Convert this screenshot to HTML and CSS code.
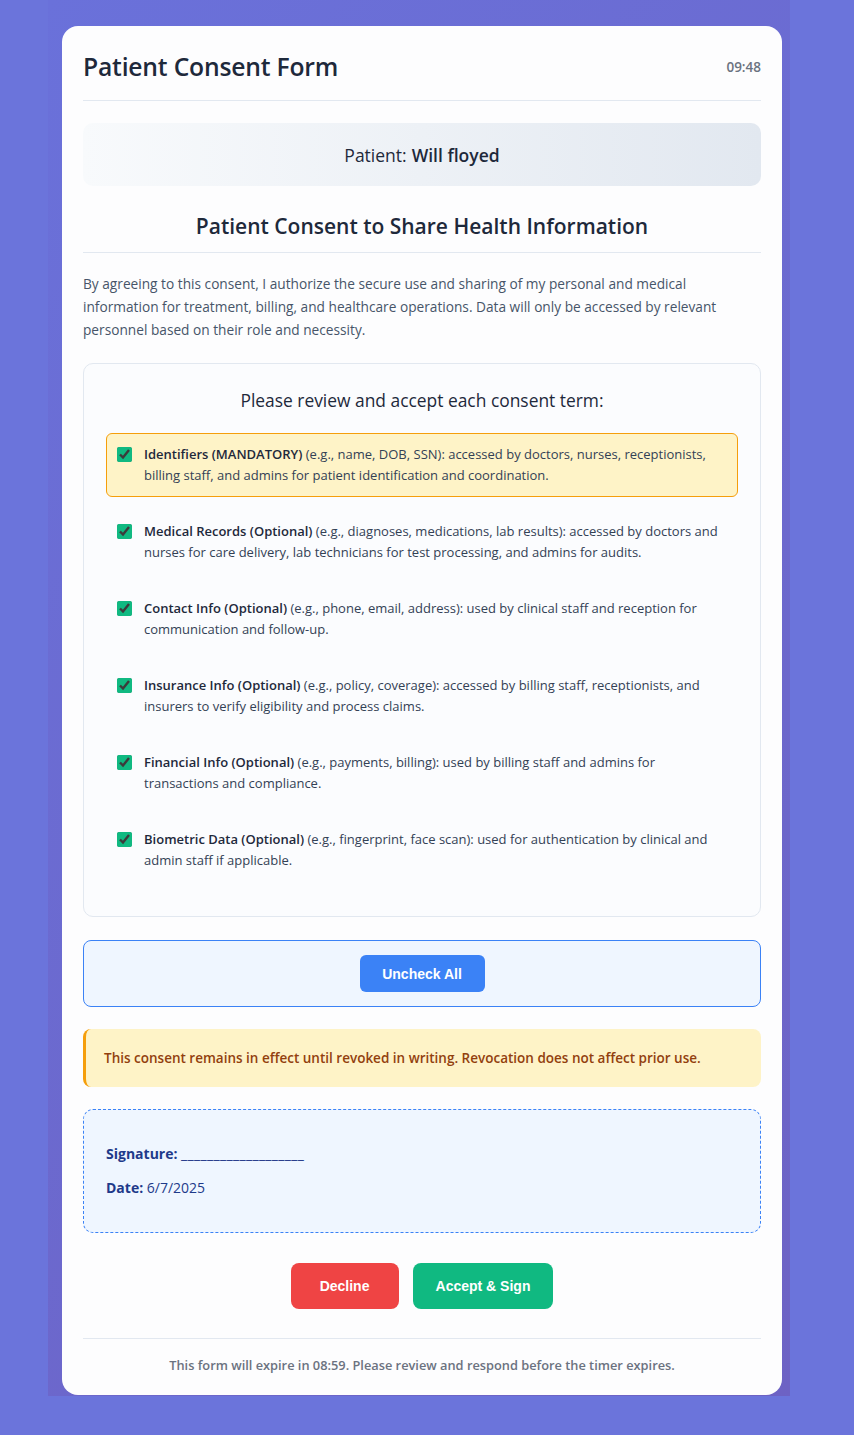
FILE: index.html
```html
<!DOCTYPE html>
<html lang="en">
<head>
<meta charset="utf-8">
<title>Patient Consent Form</title>
<link rel="stylesheet" href="styles.css">
</head>
<body>
<div class="page">
  <main class="card">
    <header class="header">
      <h1 class="title">Patient Consent Form</h1>
      <span class="clock">09:48</span>
    </header>

    <div class="patient">Patient: <strong>Will floyed</strong></div>

    <h2 class="section-title">Patient Consent to Share Health Information</h2>

    <p class="intro">By agreeing to this consent, I authorize the secure use and sharing of my personal and medical information for treatment, billing, and healthcare operations. Data will only be accessed by relevant personnel based on their role and necessity.</p>

    <section class="terms">
      <h3 class="terms-title">Please review and accept each consent term:</h3>
      <label class="term term-mandatory">
        <input type="checkbox" checked>
        <span><strong>Identifiers (MANDATORY)</strong> (e.g., name, DOB, SSN): accessed by doctors, nurses, receptionists, billing staff, and admins for patient identification and coordination.</span>
      </label>
      <label class="term">
        <input type="checkbox" checked>
        <span><strong>Medical Records (Optional)</strong> (e.g., diagnoses, medications, lab results): accessed by doctors and nurses for care delivery, lab technicians for test processing, and admins for audits.</span>
      </label>
      <label class="term">
        <input type="checkbox" checked>
        <span><strong>Contact Info (Optional)</strong> (e.g., phone, email, address): used by clinical staff and reception for communication and follow-up.</span>
      </label>
      <label class="term">
        <input type="checkbox" checked>
        <span><strong>Insurance Info (Optional)</strong> (e.g., policy, coverage): accessed by billing staff, receptionists, and insurers to verify eligibility and process claims.</span>
      </label>
      <label class="term">
        <input type="checkbox" checked>
        <span><strong>Financial Info (Optional)</strong> (e.g., payments, billing): used by billing staff and admins for transactions and compliance.</span>
      </label>
      <label class="term">
        <input type="checkbox" checked>
        <span><strong>Biometric Data (Optional)</strong> (e.g., fingerprint, face scan): used for authentication by clinical and admin staff if applicable.</span>
      </label>
    </section>

    <div class="bulk">
      <button class="btn btn-blue" type="button">Uncheck All</button>
    </div>

    <div class="notice">This consent remains in effect until revoked in writing. Revocation does not affect prior use.</div>

    <div class="signature">
      <p><strong>Signature:</strong> <span class="sign-line">___________________</span></p>
      <p><strong>Date:</strong> 6/7/2025</p>
    </div>

    <div class="actions">
      <button class="btn btn-red" type="button">Decline</button>
      <button class="btn btn-green" type="button">Accept &amp; Sign</button>
    </div>

    <footer class="footer">This form will expire in 08:59. Please review and respond before the timer expires.</footer>
  </main>
</div>
</body>
</html>
```

FILE: styles.css
```css
html {
  background: #6b74db;
}
body {
  margin: 0;
  font-family: "Open Sans", "Noto Sans", sans-serif;
  color: #1e293b;
}
.page {
  margin-left: 48px;
  width: 742px;
  box-sizing: border-box;
  padding: 26px 8px 1px 14px;
  background: linear-gradient(135deg, #6a71da 0%, #6d62c4 100%);
}
.card {
  background: #fdfdfe;
  border-radius: 16px;
  padding: 21px 21px 20px;
}
.header {
  display: flex;
  justify-content: space-between;
  align-items: center;
  padding-bottom: 13px;
  border-bottom: 1px solid #e2e8f0;
}
.title {
  margin: 0;
  font-size: 24.7px;
  line-height: 40px;
  font-weight: 600;
  color: #1e293b;
  letter-spacing: -0.2px;
}
.clock {
  font-size: 13.5px;
  font-weight: 600;
  color: #6b7280;
}
.patient {
  margin-top: 22px;
  height: 63px;
  border-radius: 10px;
  background: linear-gradient(90deg, #f8fafc 0%, #e2e8f0 100%);
  display: flex;
  align-items: center;
  justify-content: center;
  font-size: 17.5px;
  color: #1e293b;
}
.patient strong {
  margin-left: 5px;
  font-weight: 600;
}
.section-title {
  margin: 18px 0 0;
  font-size: 21px;
  line-height: 44px;
  font-weight: 600;
  text-align: center;
  padding-bottom: 4px;
  border-bottom: 1px solid #e2e8f0;
}
.intro {
  margin: 19px 0 0;
  font-size: 13.7px;
  line-height: 23px;
  color: #475569;
}
.terms {
  margin-top: 22px;
  border: 1px solid #e2e8f0;
  border-radius: 10px;
  background: #fbfcfe;
  padding: 21px 22px 21px;
}
.terms-title {
  margin: 0 0 18px;
  font-size: 17.4px;
  line-height: 30px;
  font-weight: 500;
  text-align: center;
}
.term {
  display: flex;
  align-items: flex-start;
  gap: 12px;
  padding: 10px 10px;
  border: 1px solid transparent;
  border-radius: 6px;
  margin-bottom: 13px;
  font-size: 13px;
  line-height: 21px;
  color: #334155;
}
.term strong {
  font-weight: 600;
  color: #1e293b;
}
.term input {
  margin: 3px 0 0;
  width: 15px;
  height: 15px;
  flex: none;
  accent-color: #10b981;
}
.term-mandatory {
  background: #fef3c7;
  border-color: #f59e0b;
}
.bulk {
  margin-top: 23px;
  border: 1px solid #3b82f6;
  border-radius: 8px;
  background: #eff6ff;
  padding: 14px;
  display: flex;
  justify-content: center;
}
.btn {
  border: none;
  color: #fff;
  font-family: "Liberation Sans", Arial, sans-serif;
  font-weight: 700;
  font-size: 14px;
  cursor: pointer;
}
.btn-blue {
  background: #3b82f6;
  border-radius: 6px;
  width: 125px;
  height: 37px;
}
.notice {
  margin-top: 22px;
  background: #fef3c7;
  border-left: 3px solid #f59e0b;
  border-radius: 8px;
  padding: 19px 18px;
  font-size: 13.5px;
  line-height: 20px;
  font-weight: 600;
  color: #92400e;
}
.signature {
  margin-top: 22px;
  border: 1px dashed #3b82f6;
  border-radius: 10px;
  background: #eff6ff;
  padding: 21px 22px;
  color: #1e3a8a;
  font-size: 14px;
  line-height: 20px;
}
.signature strong {
  font-weight: 700;
}
.sign-line {
  letter-spacing: 0.35px;
}
.signature p {
  margin: 13px 0 14px;
}
.signature p:last-child {
  margin-bottom: 13px;
}
.actions {
  margin-top: 30px;
  display: flex;
  justify-content: center;
  gap: 14px;
}
.btn-red,
.btn-green {
  height: 46px;
  border-radius: 8px;
  padding: 0 23px;
  min-width: 108px;
}
.btn-red {
  background: #ef4444;
}
.btn-green {
  background: #10b981;
}
.footer {
  margin-top: 29px;
  border-top: 1px solid #e2e8f0;
  padding-top: 16px;
  text-align: center;
  font-size: 12.8px;
  line-height: 20px;
  font-weight: 600;
  color: #6b7280;
}
```
